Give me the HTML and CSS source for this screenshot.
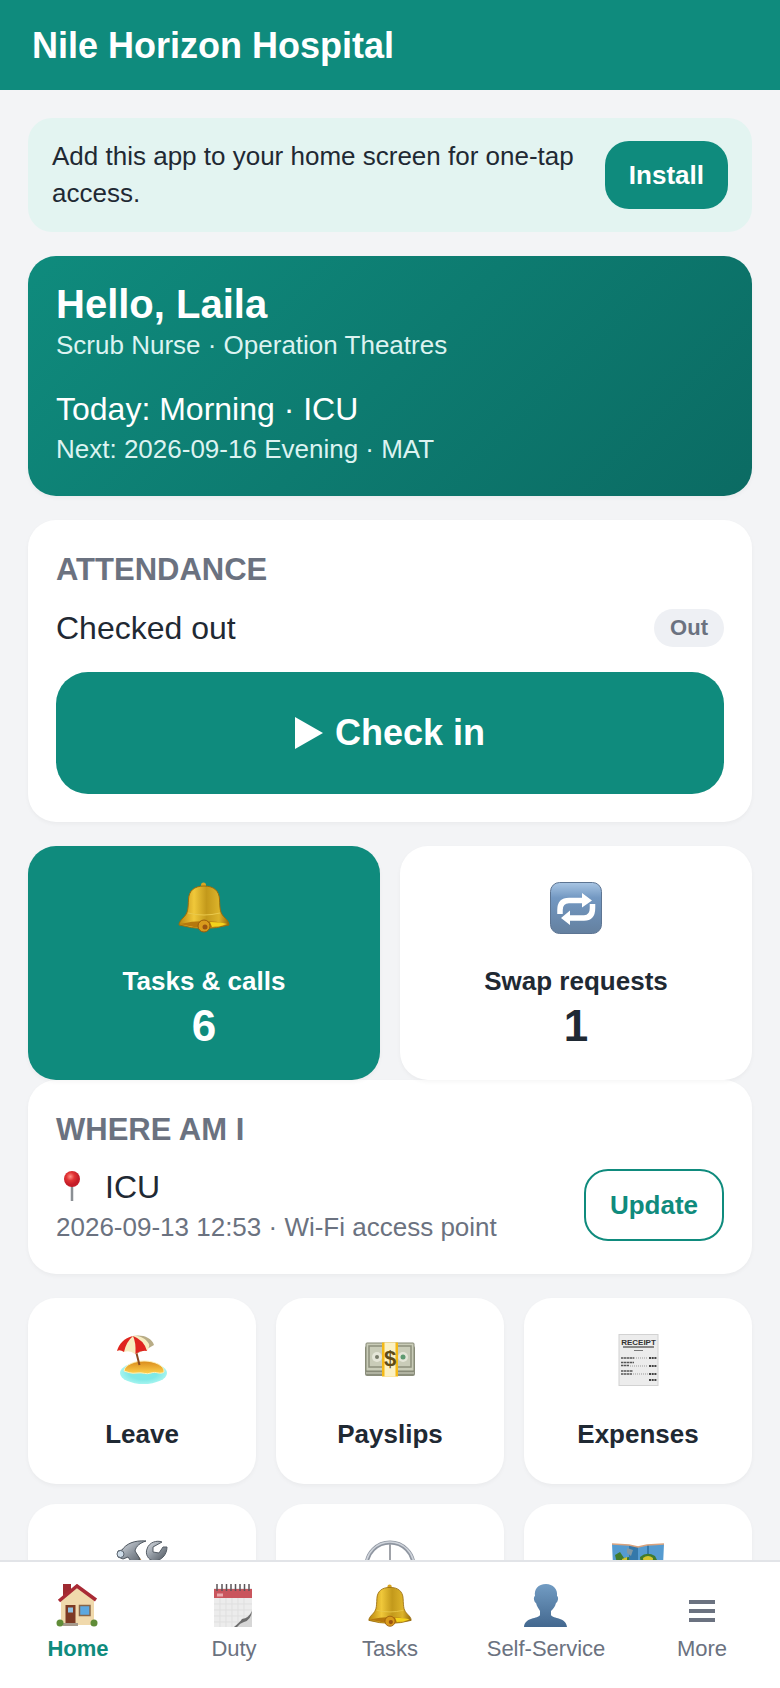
FILE: index.html
```html
<!DOCTYPE html>
<html lang="en">
<head>
  <meta charset="utf-8">
  <meta name="viewport" content="width=device-width, initial-scale=1">
  <title>Nile Horizon Hospital</title>
  <link rel="stylesheet" href="styles.css">
</head>
<body>
  <!-- shared gradients and the bell -->
  <svg class="sprite" width="0" height="0" aria-hidden="true">
    <defs>
      <linearGradient id="gold">
        <stop offset="0" stop-color="#b9860f"/>
        <stop offset=".3" stop-color="#f0c83a"/>
        <stop offset=".55" stop-color="#c3991b"/>
        <stop offset=".8" stop-color="#dcb32a"/>
        <stop offset="1" stop-color="#93690a"/>
      </linearGradient>
      <linearGradient id="blue" x2="0" y2="1">
        <stop offset="0" stop-color="#a9c6e4"/>
        <stop offset=".3" stop-color="#7398c2"/>
        <stop offset="1" stop-color="#64809f"/>
      </linearGradient>
      <linearGradient id="person" x2="0" y2="1">
        <stop offset="0" stop-color="#729cc3"/>
        <stop offset="1" stop-color="#43688f"/>
      </linearGradient>
      <linearGradient id="sand" x2="0" y2="1">
        <stop offset="0" stop-color="#d98a1c"/>
        <stop offset="1" stop-color="#ffd34d"/>
      </linearGradient>
      <linearGradient id="steel" x2="1" y2="1">
        <stop offset="0" stop-color="#dfe3e8"/>
        <stop offset=".5" stop-color="#8e969f"/>
        <stop offset="1" stop-color="#4d545c"/>
      </linearGradient>
      <radialGradient id="red" cx=".4" cy=".35">
        <stop offset="0" stop-color="#ff8f85"/>
        <stop offset=".5" stop-color="#e23434"/>
        <stop offset="1" stop-color="#c41c28"/>
      </radialGradient>
      <radialGradient id="sea">
        <stop offset=".6" stop-color="#7fe9e6"/>
        <stop offset="1" stop-color="#a5f4ef"/>
      </radialGradient>
    </defs>
    <symbol id="bell" viewBox="0 0 52 52">
      <circle cx="25.500" cy="3" r="2.500" fill="#d9a521"/>
      <path d="M26 4C16 4 11 9 10.500 17C10 28 10 31 5 36C2 39 1 41 1 43Q26 50 51 43C51 40 49 38 47 36C42 31 42 28 41.500 17C41 9 36 4 26 4Z" fill="url(#gold)" stroke="#9a6c0c"/>
      <path d="M10 31Q26 35 42 31" fill="none" stroke="#e9c94c"/>
      <path d="M2 42Q26 36 50 42Q26 49 2 42Z" fill="#b5780d"/>
      <path d="M32 40Q44 40 49 42Q42 45 34 45Z" fill="#f4d31b"/>
      <circle cx="26" cy="44" r="6" fill="#d99a1c" stroke="#9a5c0c"/>
      <circle cx="27" cy="45" r="2.500" fill="#9c5410"/>
    </symbol>
  </svg>

  <div class="app">
    <header class="topbar">Nile Horizon Hospital</header>

    <main class="content">
      <div class="install">
        <p>Add this app to your home screen for one-tap access.</p>
        <button type="button" class="btn btn-install">Install</button>
      </div>

      <section class="card hero">
        <h1>Hello, Laila</h1>
        <p class="sub">Scrub Nurse · Operation Theatres</p>
        <p class="today">Today: Morning · ICU</p>
        <p class="sub">Next: 2026-09-16 Evening · MAT</p>
      </section>

      <section class="card">
        <h2>Attendance</h2>
        <div class="row status">
          <span>Checked out</span>
          <span class="badge">Out</span>
        </div>
        <button type="button" class="btn-check">
          <svg width="28" height="32" viewBox="0 0 28 32" aria-hidden="true"><path d="M0 0L28 16L0 32Z" fill="currentColor"/></svg>
          Check in
        </button>
      </section>

      <div class="tiles two">
        <a href="#tasks" class="tile primary">
          <svg class="icon" aria-hidden="true"><use href="#bell"/></svg>
          <span>Tasks &amp; calls</span>
          <strong>6</strong>
        </a>
        <a href="#swaps" class="tile">
          <svg class="icon" viewBox="0 0 52 52" aria-hidden="true">
            <rect x=".5" y=".5" width="51" height="51" rx="9" fill="url(#blue)" stroke="#5d7593"/>
            <path d="M10 32V28Q10 18.500 19 18.500H33M42.500 22V26Q42.500 36 34 36H20" fill="none" stroke="#fff" stroke-width="5.500"/>
            <path d="M32 11L42 18.500L32 25.500ZM20 28.500L11 36L20 43Z" fill="#fff"/>
          </svg>
          <span>Swap requests</span>
          <strong>1</strong>
        </a>
      </div>

      <section class="card">
        <h2>Where am I</h2>
        <div class="row place">
          <div>
            <p class="where">
              <svg width="40" height="34" viewBox="0 0 40 34" aria-hidden="true">
                <path d="M16 14V31" stroke="#8b8f94" stroke-width="2.500"/>
                <circle cx="16" cy="9" r="8" fill="url(#red)"/>
              </svg>
              ICU
            </p>
            <p class="sub muted">2026-09-13 12:53 · Wi-Fi access point</p>
          </div>
          <button type="button" class="btn btn-outline">Update</button>
        </div>
      </section>

      <div class="tiles three">
        <a href="#leave" class="tile">
          <svg class="icon" viewBox="0 0 52 52" aria-hidden="true">
            <ellipse cx="27.500" cy="39" rx="23.500" ry="11" fill="url(#sea)"/>
            <path d="M8 37C9 30 20 27 28 27C39 27 49 32 48 38C44 41 40 37 35 39C30 41 27 38 21 39C15 40 12 38 8 37Z" fill="url(#sand)" stroke="#fff1b8"/>
            <path d="M20 17L23.500 31" stroke="#8a4a20" stroke-width="2"/>
            <path d="M17 2C25 0 36 3 38 11L31 15Q26 17 20 20Z" fill="#b8ac86"/>
            <path d="M17 2C8 4 3 10 1 17Q4 15 8 18Q14 16 19 20Q25 16 31 17Q34 12 33 10C30 5 24 1 17 2Z" fill="#f7ecc0"/>
            <path d="M17 2C8 4 3 10 1 17Q4 15 8 18Q10 8 17 2ZM17 2Q20 8 19.500 20Q25 16 31 17Q28 6 17 2Z" fill="#df2420"/>
          </svg>
          <span>Leave</span>
        </a>
        <a href="#payslips" class="tile">
          <svg class="icon" viewBox="0 0 52 52" aria-hidden="true">
            <rect x="1" y="12" width="50" height="30" rx="2" fill="#8b8e7c"/>
            <path d="M2 36H50M2 39H50" stroke="#d6d8c7"/>
            <rect x="2" y="9" width="48" height="28" rx="1" fill="#c9ccb8" stroke="#858874"/>
            <rect x="5" y="12" width="42" height="21" fill="none" stroke="#8d907c" stroke-width="1.500"/>
            <circle cx="13" cy="23" r="5" fill="#e5e6d8"/>
            <circle cx="39" cy="23" r="5" fill="#e5e6d8"/>
            <circle cx="13" cy="23" r="2" fill="#777b69"/>
            <circle cx="39" cy="23" r="2.500" fill="#5e9a70"/>
            <rect x="18" y="8.500" width="16" height="34" fill="#f5b915"/>
            <rect x="20.500" y="8.500" width="11" height="34" fill="#fbf1c4"/>
            <text x="26" y="32" text-anchor="middle" class="dollar">$</text>
          </svg>
          <span>Payslips</span>
        </a>
        <a href="#expenses" class="tile">
          <svg class="icon" viewBox="0 0 52 52" aria-hidden="true">
            <rect x="7" y=".5" width="39" height="51" fill="#ececec" stroke="#d2d2d2"/>
            <text x="26.500" y="11" text-anchor="middle" class="receipt">RECEIPT</text>
            <path d="M11 13H42" stroke="#888" stroke-width="2"/>
            <path d="M22 16.500H31" stroke="#777"/>
            <path d="M9 24H22M9 28.500H22M9 31.500H17M9 37H21M9 40H20" stroke="#555" stroke-width="1.500" stroke-dasharray="2.500 .5"/>
            <path d="M37 24H45M37 32H45M37 40H45M37 46H45" stroke="#444" stroke-width="2" stroke-dasharray="2 .7"/>
            <path d="M22 24H36M18 32H36M21 40H36" stroke="#999" stroke-dasharray="1 1"/>
          </svg>
          <span>Expenses</span>
        </a>
        <a href="#repairs" class="tile" aria-label="Repairs">
          <svg class="icon" viewBox="0 0 52 52" aria-hidden="true">
            <path d="M14 16L40 50L45 46L20 13Z" fill="#a5793e"/>
            <path d="M37 16L8 45L13 50L41 20Z" fill="url(#steel)"/>
            <path d="M46 2C41 0 33 2 31 9C29 14 32 20 38 21C45 21 51 15 51 7L47 7L43 13L37 12L37 7Z" fill="url(#steel)" stroke="#555d66"/>
            <path d="M2 11L6 10C10 4 18 0 30 1C24 3 20 6 19 11L24 19L17 24L12 17L7 19L2 17Z" fill="url(#steel)" stroke="#4e565f"/>
            <circle cx="4.500" cy="14" r="3.500" fill="#cfdde9" stroke="#59636e"/>
          </svg>
        </a>
        <a href="#hours" class="tile" aria-label="Hours">
          <svg class="icon" viewBox="0 0 52 52" aria-hidden="true">
            <circle cx="26" cy="26" r="23.500" fill="#fff" stroke="#8f96a1" stroke-width="4"/>
            <circle cx="26" cy="26" r="24" fill="none" stroke="#cfd4db" stroke-width="1.500"/>
            <path d="M26 4V26" stroke="#a0a3a9" stroke-width="2"/>
          </svg>
        </a>
        <a href="#map" class="tile" aria-label="Map">
          <svg class="icon" viewBox="0 0 52 52" aria-hidden="true">
            <path d="M0 4L17 5L26 7L35 5L52 4L50 47L34 50L26 47L17 50L2 47Z" fill="#559bd0"/>
            <path d="M17 5L26 7V47L17 50ZM35 5L37 5V50H35Z" fill="#3478aa"/>
            <path d="M0 4L17 5L26 7L35 5L52 4" fill="none" stroke="#d8a27d" stroke-width="1.500"/>
            <path d="M3 15L8 12L12 18L17 17L18 32L8 35ZM28 17Q35 11 43 16L46 22L43 36L30 34Z" fill="#407b2d"/>
            <path d="M10 19L15 17V29L11 27ZM31 18Q36 14 41 18L40 29L32 28Z" fill="#d4c52e"/>
            <path d="M15 8L21 10L19 16L15 13Z" fill="#8098a4"/>
          </svg>
        </a>
      </div>
    </main>

    <nav class="tabs">
      <a href="#home" class="active">
        <svg viewBox="0 0 44 44" aria-hidden="true">
          <rect x="7" y="0" width="8" height="14" fill="#9f2a31"/>
          <path d="M5 16L21 3L38 16V41H5Z" fill="#f0d9ac"/>
          <path d="M3 17L21 2L40 16" fill="none" stroke="#a92a35" stroke-width="3.500"/>
          <rect x="9.500" y="21" width="10" height="20" fill="#7c3a24"/>
          <rect x="12" y="23.500" width="5" height="5" fill="#8fc3e4"/>
          <rect x="23.500" y="21.500" width="10.500" height="10" fill="#5ca8e0" stroke="#876648" stroke-width="1.500"/>
          <path d="M7 42H22V39H7Z" fill="#a59a8c"/>
          <circle cx="4" cy="39" r="3.500" fill="#608c38"/>
          <circle cx="38" cy="39" r="3.500" fill="#608c38"/>
        </svg>
        <span>Home</span>
      </a>
      <a href="#duty">
        <svg viewBox="0 0 44 44" aria-hidden="true">
          <rect x="2" y="4" width="38" height="39" fill="#ececec"/>
          <path d="M8 14V43M14 14V43M20 14V43M26 14V43M32 14V43M2 20H40M2 26H40M2 32H40M2 38H40" stroke="#dfdfdf"/>
          <rect x="2" y="5" width="38" height="9" fill="#c9555d"/>
          <path d="M5 11H11" stroke="#e9a8ac" stroke-width="3"/>
          <path d="M5 0V7M10 0V7M14.500 0V7M19 0V7M23.500 0V7M28 0V7M32.500 0V7M37 0V7" stroke="#5d5559" stroke-width="1.500"/>
          <path d="M22 43Q28 38 30 35Q37 34 40 26V43Z" fill="#d6d6d6"/>
          <path d="M22 43Q28 38 30 35Q37 34 40 27Q39 36 32 38Q28 39 25 43Z" fill="#6d6d6d"/>
        </svg>
        <span>Duty</span>
      </a>
      <a href="#tasks">
        <svg aria-hidden="true"><use href="#bell"/></svg>
        <span>Tasks</span>
      </a>
      <a href="#self">
        <svg viewBox="0 0 44 44" aria-hidden="true">
          <path d="M22 0C14 0 10 5 11 12C9 13 10 18 12 19C13 23 15 25 16 27V31C14 35 1 33 0 43H43C42 33 29 35 27 31V27C29 25 31 23 32 19C34 18 35 13 33 12C34 5 29 0 22 0Z" fill="url(#person)"/>
        </svg>
        <span>Self-Service</span>
      </a>
      <a href="#more">
        <svg viewBox="0 0 44 44" aria-hidden="true"><path d="M9 18H35M9 27H35M9 36H35" stroke="currentColor" stroke-width="4"/></svg>
        <span>More</span>
      </a>
    </nav>
  </div>
</body>
</html>
```

FILE: styles.css
```css
* {
  box-sizing: border-box;
}
body {
  margin: 0;
  font-family: "Liberation Sans", Arial, sans-serif;
  font-size: 32px;
  line-height: 44px;
  color: #1f2933;
  background: #f3f4f6;
}
h1, h2, p {
  margin: 0;
}
a {
  color: inherit;
  text-decoration: none;
}
button {
  font-family: inherit;
  font-weight: bold;
  cursor: pointer;
}
svg {
  display: block;
  flex-shrink: 0;
}
.sprite {
  position: absolute;
}

.app {
  display: flex;
  flex-direction: column;
  height: 100vh;
}
.topbar {
  flex-shrink: 0;
  padding: 21px 32px 19px;
  background: #0f8b7d;
  color: white;
  font-size: 36px;
  font-weight: bold;
  line-height: 50px;
}
.content {
  flex: 1;
  min-height: 0;
  padding: 28px;
  overflow-y: auto;
  scrollbar-width: none;
}

/* Install banner */
.install {
  display: flex;
  align-items: center;
  gap: 24px;
  padding: 20px 24px;
  margin-bottom: 24px;
  border-radius: 24px;
  background: #e3f4f1;
  font-size: 26px;
  line-height: 37px;
}
.install p {
  flex: 1;
}
.btn {
  padding: 16px 24px;
  border: none;
  border-radius: 24px;
  font-size: 26px;
  line-height: 36px;
}
.btn-install {
  background: #0f8b7d;
  color: white;
}
.btn-outline {
  border: 2px solid #0f8b7d;
  background: white;
  color: #0f8b7d;
}

/* Cards */
.card {
  padding: 28px;
  margin-bottom: 24px;
  border-radius: 28px;
  background: white;
  box-shadow: 0 2px 4px rgba(0,0,0,0.04);
}
.card h2 {
  margin-bottom: 12px;
  font-size: 31px;
  line-height: 44px;
  color: #6b7280;
  text-transform: uppercase;
}
.hero {
  background: linear-gradient(135deg, #0f8b7d, #0b6b63);
  color: white;
}
.hero h1 {
  margin-bottom: 3px;
  font-size: 40px;
  line-height: 40px;
}
.sub {
  font-size: 26px;
  line-height: 37px;
}
.hero .sub {
  color: #dcf3f1;
}
.today {
  margin-top: 23px;
}
.muted {
  color: #6b7280;
}
.row {
  display: flex;
  align-items: center;
  justify-content: space-between;
}
.status {
  min-height: 48px;
  margin-bottom: 20px;
}
.place {
  min-height: 82px;
}
.badge {
  padding: 4px 16px;
  border-radius: 20px;
  background: #eef0f4;
  color: #6b7280;
  font-size: 22px;
  font-weight: bold;
  line-height: 30px;
}
.btn-check {
  display: flex;
  align-items: center;
  justify-content: center;
  gap: 12px;
  width: 100%;
  padding: 36px;
  border: none;
  border-radius: 32px;
  background: #0f8b7d;
  color: white;
  font-size: 36px;
  line-height: 50px;
}
.where {
  display: flex;
  align-items: center;
  gap: 9px;
}

/* Tiles */
.tiles {
  display: grid;
  gap: 20px;
}
.two {
  grid-template-columns: repeat(2, 1fr);
}
.three {
  grid-template-columns: repeat(3, 1fr);
}
.tile {
  min-height: 186px;
  padding: 36px 16px 28px;
  border-radius: 28px;
  background: white;
  box-shadow: 0 2px 4px rgba(0,0,0,0.04);
  font-size: 26px;
  font-weight: bold;
  line-height: 37px;
  text-align: center;
}
.tile.primary {
  background: #0f8b7d;
  color: white;
}
.tile .icon {
  width: 52px;
  height: 52px;
  margin: 0 auto 29px;
}
.three .icon {
  margin-bottom: 30px;
}
.tile span, .tile strong {
  display: block;
}
.tile strong {
  font-size: 44px;
  line-height: 52px;
}
.dollar {
  font-size: 22px;
  font-weight: bold;
  fill: #5f4b16;
}
.receipt {
  font-size: 8px;
  font-weight: bold;
  fill: #333;
}

/* Bottom tabs */
.tabs {
  display: grid;
  grid-template-columns: repeat(5, 1fr);
  flex-shrink: 0;
  padding: 22px 0 24px;
  border-top: 2px solid #e2e4e8;
  background: white;
  color: #6b7280;
  font-size: 22px;
  line-height: 30px;
}
.tabs a {
  display: flex;
  flex-direction: column;
  align-items: center;
  gap: 6px;
}
.tabs svg {
  width: 44px;
  height: 44px;
}
.tabs .active {
  color: #0f8b7d;
  font-weight: bold;
}
```
